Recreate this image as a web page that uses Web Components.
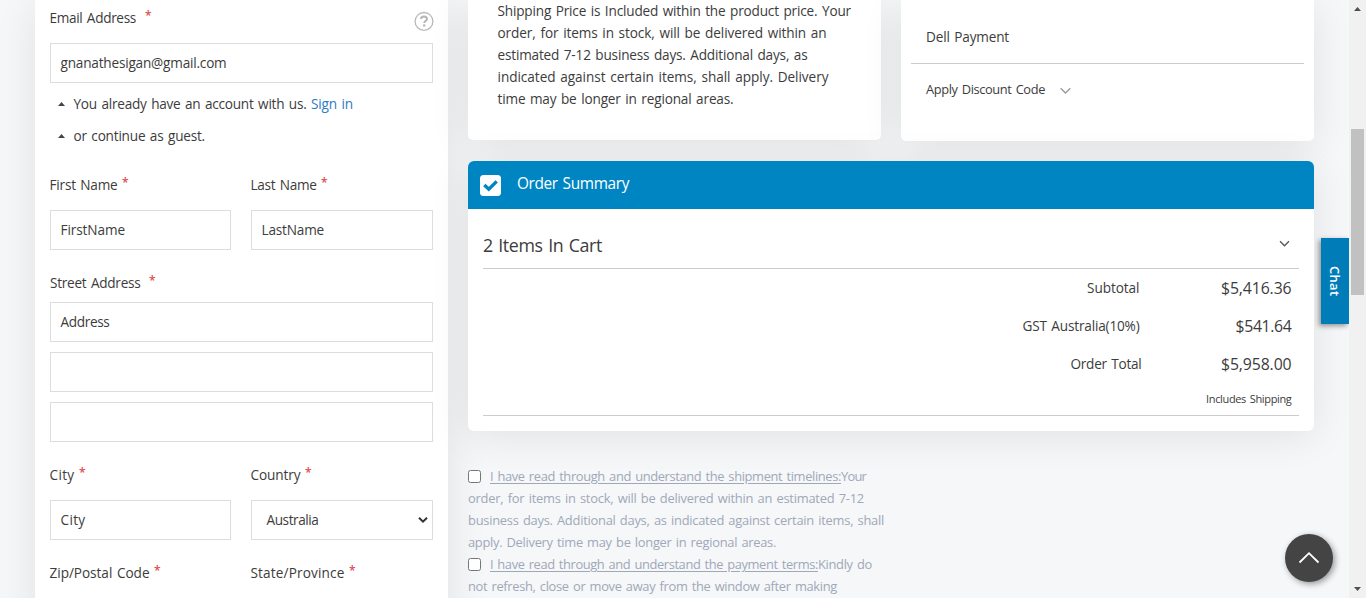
<!DOCTYPE html>
<html lang="en">
<head>
<meta charset="utf-8">
<title>Checkout</title>
<style>
html,body{margin:0;height:598px;overflow:hidden}
body{font-family:"Open Sans","Noto Sans",sans-serif;font-size:13.6px;color:#3c3c3c;background:#f5f7f9}
</style>
</head>
<body>
<checkout-page></checkout-page>

<template id="t-page">
<style>
:host{display:grid;grid-template-columns:1349px 17px;height:598px;overflow:hidden;position:relative}
main{display:grid;grid-template-columns:413px 846px;gap:20px;padding-left:35px;height:598px;overflow:hidden;align-items:start}
.right{display:flex;flex-direction:column}
.top{display:grid;grid-template-columns:413px 413px;gap:20px;align-items:start}
order-summary{margin-top:20px}
terms-list{margin-top:34px}
.ship{height:140px;box-sizing:border-box;padding-left:29.5px}
.ship fit-text{display:block;height:22px;line-height:22px}
.pay{height:141px;box-sizing:border-box;padding:0 10px}
.dell{height:52px;border-bottom:1px solid #ccc;padding:11px 0 0 15px;display:flex;align-items:center}
.disc{display:flex;align-items:center;gap:14.5px;padding:15px 0 0 15px;height:20px}
.left{height:640px;border-radius:0}
chat-tab{position:absolute;left:1321px;top:238px}
top-button{position:absolute;left:1285px;top:534px}
</style>
<main>
<ui-card class="left"><address-form></address-form></ui-card>
<div class="right">
<div class="top">
<ui-card class="ship">
<fit-text w="353.5">Shipping Price is Included within the product price. Your</fit-text>
<fit-text w="329">order, for items in stock, will be delivered within an</fit-text>
<fit-text w="310">estimated 7-12 business days. Additional days, as</fit-text>
<fit-text w="331">indicated against certain items, shall apply. Delivery</fit-text>
<fit-text w="236">time may be longer in regional areas.</fit-text>
</ui-card>
<ui-card class="pay">
<div class="dell"><fit-text w="83">Dell Payment</fit-text></div>
<div class="disc"><fit-text w="119" size="12.8">Apply Discount Code</fit-text><svg width="11" height="8" viewBox="0 0 11 8" style="margin-top:4px"><path d="M.7 1.3 5.5 6 10.3 1.3" fill="none" stroke="#999" stroke-width="1.3"/></svg></div>
</ui-card>
</div>
<order-summary></order-summary>
<terms-list></terms-list>
</div>
</main>
<scroll-bar></scroll-bar>
<chat-tab></chat-tab>
<top-button></top-button>
</template>

<template id="t-form">
<style>
:host{display:block;padding:0 15px}
.row{display:grid;grid-template-columns:181px 182px;column-gap:20px}
.email{display:flex;justify-content:space-between;height:43px}
.email svg{margin:11px -1px 0 0}
ul{list-style:none;margin:5px 0 17px;padding:0}
li{display:flex;align-items:center;height:32px;padding-left:8px}
li svg{margin-right:8.5px}
fit-text.link{color:#2d7cc4;margin-left:4.5px}
input-box+input-box{margin-top:10px}
</style>
<div class="email"><field-label w="86.5" gap="9" style="height:36px">Email Address</field-label>
<svg width="20" height="20" viewBox="0 0 20 20"><circle cx="10" cy="10.4" r="8.9" fill="none" stroke="#b9b9b9" stroke-width="1.3"/><path d="M7 8.1C7 6.3 8.3 5.4 10 5.4s3 .9 3 2.5c0 2.1-2.8 2.1-2.8 4.1" fill="none" stroke="#b5b5b5" stroke-width="2"/><rect x="9.1" y="13.4" width="2.2" height="2.2" fill="#b5b5b5"/></svg></div>
<input-box w="166">gnanathesigan@gmail.com</input-box>
<ul>
<li><svg width="7" height="4"><path d="M0 4 3.5 0 7 4z" fill="#444"/></svg><fit-text w="233">You already have an account with us.</fit-text><fit-text class="link" w="42">Sign in</fit-text></li>
<li><svg width="7" height="4"><path d="M0 4 3.5 0 7 4z" fill="#444"/></svg><fit-text w="131.5">or continue as guest.</fit-text></li>
</ul>
<div class="row" style="margin-top:23px">
<field-label w="68" style="height:20px">First Name</field-label><field-label w="66" style="height:20px">Last Name</field-label>
</div>
<div class="row" style="margin-top:15px"><input-box w="64.5">FirstName</input-box><input-box w="62.5" style="margin-top:0">LastName</input-box></div>
<field-label w="90.5" gap="8.5" style="height:20px;margin:23px 0 9px">Street Address</field-label>
<input-box w="49">Address</input-box>
<input-box w="0"></input-box>
<input-box w="0"></input-box>
<div class="row" style="margin-top:23px">
<field-label w="25" style="height:20px">City</field-label><field-label w="50" style="height:20px">Country</field-label>
</div>
<div class="row" style="margin-top:15px"><input-box w="25">City</input-box><input-box w="52" select style="margin-top:0">Australia</input-box></div>
<div class="row" style="margin-top:23px">
<field-label w="100" style="height:20px">Zip/Postal Code</field-label><field-label w="94" style="height:20px">State/Province</field-label>
</div>
</template>

<template id="t-order">
<style>
:host{display:block;height:270px;background:#fff;border-radius:6px;overflow:hidden;box-shadow:0 5px 40px rgba(0,0,0,.09)}
header{display:flex;align-items:center;gap:16px;height:48px;padding-left:12px;background:#0085c3;color:#fff}
.body{padding:0 15px}
.cart{display:flex;justify-content:space-between;align-items:center;height:59px;padding-right:9px;border-bottom:1px solid #ccc}
.cart fit-text{margin-top:13px}
.sum{display:grid;grid-template-columns:1fr 152px;grid-template-rows:38px 38px 38px 32px;align-items:center;justify-items:end;padding-right:7.5px;border-bottom:1px solid #ccc}
.sum .note{grid-column:1/3}
</style>
<header><svg width="21" height="21" viewBox="0 0 21 21"><rect width="21" height="21" rx="3.5" fill="#fff"/><path d="M4.3 10 8.8 14.2 16.7 6.4" fill="none" stroke="#0085c3" stroke-width="3.4"/></svg><fit-text w="112" size="15.4" medium style="margin-top:-2px">Order Summary</fit-text></header>
<div class="body">
<div class="cart"><fit-text w="119" size="17.8">2 Items In Cart</fit-text><svg width="11" height="8" viewBox="0 0 11 8" style="margin-top:11px"><path d="M1 1.3 5.5 5.8 10 1.3" fill="none" stroke="#555" stroke-width="1.3"/></svg></div>
<div class="sum">
<fit-text w="52.5">Subtotal</fit-text><fit-text w="70.5" size="15.8">$5,416.36</fit-text>
<fit-text w="117">GST Australia(10%)</fit-text><fit-text w="56" size="15.8">$541.64</fit-text>
<fit-text w="71" style="margin-right:-2px">Order Total</fit-text><fit-text w="70.5" size="15.8">$5,958.00</fit-text>
<fit-text class="note" w="85.5" size="11">Includes Shipping</fit-text>
</div>
</div>
</template>

<template id="t-terms">
<style>
:host{display:block;color:#a0a8b8}
div{display:flex;align-items:center;height:22px}
i{width:11px;height:11px;border:1px solid #767676;border-radius:2.5px;background:#fff;margin-right:9px}
</style>
<div><i></i><fit-text w="351" size="12.9" u>I have read through and understand the shipment timelines:</fit-text><fit-text w="25" size="12.9">Your</fit-text></div>
<div><fit-text w="396" size="12.9">order, for items in stock, will be delivered within an estimated 7-12</fit-text></div>
<div><fit-text w="416" size="12.9">business days. Additional days, as indicated against certain items, shall</fit-text></div>
<div><fit-text w="308" size="12.9">apply. Delivery time may be longer in regional areas.</fit-text></div>
<div><i></i><fit-text w="328" size="12.9" u>I have read through and understand the payment terms:</fit-text><fit-text w="54" size="12.9">Kindly do</fit-text></div>
<div><fit-text w="369" size="12.9">not refresh, close or move away from the window after making</fit-text></div>
</template>

<script>
const define = (name, html, init) => customElements.define(name, class extends HTMLElement {
  connectedCallback() {
    if (this.shadowRoot) return;
    const root = this.attachShadow({ mode: 'open' });
    if (html[0] === '#') root.append(document.querySelector(html).content.cloneNode(true));
    else root.innerHTML = html;
    if (init) init(this, root);
  }
});

// A single line of text whose tracking is set so that it spans the width "w".
define('fit-text', `<style>
:host{display:inline-block;white-space:nowrap;line-height:20px;flex:none;word-spacing:1.2px}
:host([u]) span{text-decoration:underline;text-underline-offset:2px}
:host([medium]) span{font-weight:500}
</style><span><slot></slot></span>`, (host, root) => {
  const span = root.querySelector('span');
  const w = +host.getAttribute('w');
  if (host.hasAttribute('size')) host.style.fontSize = host.getAttribute('size') + 'px';
  const n = host.textContent.length;
  if (n && w) span.style.letterSpacing = (w - span.getBoundingClientRect().width) / n + 'px';
  if (w) host.style.width = w + 'px';
});

define('ui-card', `<style>
:host{display:block;background:#fff;border-radius:0 0 5px 5px;box-shadow:0 5px 40px rgba(0,0,0,.09)}
</style><slot></slot>`);

define('field-label', `<style>
:host{display:flex;align-items:center;margin-left:-.5px}
b{font-weight:600;font-size:12px;line-height:14px;color:#e0494e;margin-top:-5px}
</style><fit-text></fit-text><b>*</b>`, (host, root) => {
  const t = document.createElement('fit-text');
  t.setAttribute('w', host.getAttribute('w'));
  t.textContent = host.textContent;
  root.querySelector('fit-text').replaceWith(t);
  root.querySelector('b').style.marginLeft = (host.getAttribute('gap') || 4.5) + 'px';
});

define('input-box', `<style>
:host{display:flex;align-items:center;justify-content:space-between;box-sizing:border-box;height:40px;border:1px solid #ddd;padding:0 4px 0 9.5px;background:#fff}
:host([select]){padding-left:14.5px}
svg{display:none}
:host([select]) svg{display:block}
</style><svg width="10" height="8" viewBox="0 0 10 8"><path d="M1 1.7 5 5.7 9 1.7" fill="none" stroke="#333" stroke-width="2"/></svg>`, (host, root) => {
  if (!host.textContent) return;
  const t = document.createElement('fit-text');
  t.setAttribute('w', host.getAttribute('w'));
  t.textContent = host.textContent;
  root.insertBefore(t, root.querySelector('svg'));
});

define('scroll-bar', `<style>
:host{display:flex;flex-direction:column;align-items:center;height:598px;background:#f1f1f1}
i{width:13px;height:166px;margin:118px 0 auto;background:#c1c1c1}
svg{display:block}
</style><svg width="7" height="11"><path d="M0 11 3.5 7 7 11z" fill="#505050"/></svg><i></i><svg width="7" height="12"><path d="M0 1h7L3.5 5z" fill="#505050"/></svg>`);

define('chat-tab', `<style>
:host{display:flex;align-items:center;justify-content:center;width:28px;height:86px;background:#007db8;color:#fff;writing-mode:vertical-rl;box-shadow:-2px 2px 5px rgba(0,0,0,.4);clip-path:inset(-10px 0 -10px -10px)}
span{font-size:13px;font-weight:600;letter-spacing:.3px;line-height:20px;margin:1px 0 0}
</style><span>Chat</span>`);

define('top-button', `<style>
:host{display:block;width:48px;height:48px;border-radius:50%;background:#444;box-shadow:2px 2px 6px rgba(0,0,0,.4)}
svg{display:block}
</style><svg width="48" height="48"><path d="M14.5 28.5 24 19.2 33.5 28.5" fill="none" stroke="#fff" stroke-width="1.8"/></svg>`);

define('order-summary', '#t-order');
define('terms-list', '#t-terms');
define('address-form', '#t-form');
define('checkout-page', '#t-page');
</script>
</body>
</html>
